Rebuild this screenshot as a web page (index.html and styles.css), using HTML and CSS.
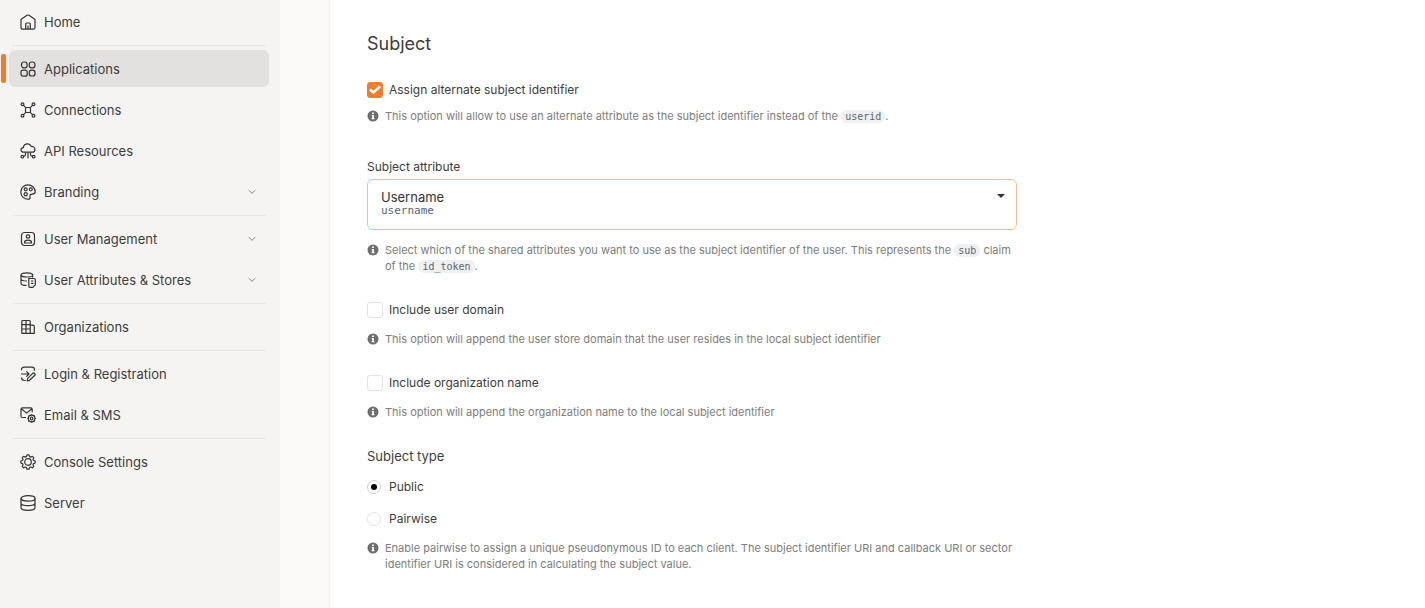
FILE: index.html
```html
<!DOCTYPE html>
<html lang="en">
<head>
<meta charset="utf-8">
<meta name="viewport" content="width=device-width, initial-scale=1">
<title>Application – Subject</title>
<link rel="stylesheet" href="styles.css">
</head>
<body>
<svg class="sprite" aria-hidden="true">
  <symbol id="info" viewBox="0 0 12 12"><circle cx="6" cy="6" r="5.5" fill="currentColor"/><path d="M5 2.5h2v1.6H5zM4.6 5h2.3v3.2h.6v1.1h-3V8.200h.6V6.100h-.5z" fill="#fff"/></symbol>
  <symbol id="chevron" viewBox="0 0 8 6"><path d="M.7 1.200 4 4.300l3.300-3.100" fill="none" stroke="currentColor" stroke-width="1"/></symbol>
</svg>
<div class="layout">
  <nav class="sidebar" aria-label="Main">
    <ul class="group">
      <li><a class="item" href="#home">
        <svg class="icon" viewBox="0 0 16 16"><path d="M1 6.300Q1 5.500 1.600 5L7 1.300q1-.6 2 0L14.400 5q.6.500.6 1.300v7.200q0 1.700-1.700 1.700H2.700Q1 15.200 1 13.500z"/><path d="M5.700 15V10q0-1 1-1h2.600q1 0 1 1v5M8 11.500V15"/></svg>
        <span class="label">Home</span></a></li>
    </ul>
    <ul class="group">
      <li><a class="item active" href="#applications" aria-current="page">
        <svg class="icon" viewBox="0 0 16 16"><rect x="1.500" y="1" width="5.600" height="5.800" rx="2.300"/><rect x="9.300" y="1" width="5.600" height="5.800" rx="2.300"/><rect x="1" y="9.200" width="6.200" height="6" rx="2"/><rect x="9.300" y="9.200" width="5.700" height="5.800" rx="2.300"/></svg>
        <span class="label">Applications</span></a></li>
      <li><a class="item" href="#connections">
        <svg class="icon" viewBox="0 0 16 16"><rect x="5.500" y="5.500" width="5" height="5" rx="1"/><circle cx="2.500" cy="2.300" r="1.400"/><circle cx="13.500" cy="2.300" r="1.400"/><circle cx="2.500" cy="13.700" r="1.400"/><circle cx="13.500" cy="13.700" r="1.400"/><path d="m3.500 3.300 2.300 2.400m6.700-2.400-2.300 2.400m-6.700 7 2.300-2.400m6.700 2.400-2.300-2.400"/></svg>
        <span class="label">Connections</span></a></li>
      <li><a class="item" href="#api-resources">
        <svg class="icon" viewBox="0 0 16 16"><path d="M4 9.200C1.900 9.200 1 8 1 6.800s1-2.200 2.300-2.200C3.700 2.300 5.500.900 7.500.900c1.800 0 3 .9 3.600 2.500 2.200-.1 3.900 1 3.900 3 0 1.700-1.200 2.800-2.800 2.800z"/><circle cx="2.300" cy="13.700" r="1.300"/><circle cx="13.700" cy="13.700" r="1.300"/><path d="M5.500 9.500v2.200q0 1.500-2 1.600M10.500 9.500v2.200q0 1.500 2 1.600M8 9.500v5.800"/></svg>
        <span class="label">API Resources</span></a></li>
      <li><a class="item" href="#branding">
        <svg class="icon" viewBox="0 0 16 16"><path d="M8 .8A7.200 7.200 0 1 0 8 15.200c1.900 0 2.300-1 2-2.300-.3-1.700.3-2.700 2-2.700 2 0 3.200-.6 3.200-2.600A7.200 7.200 0 0 0 8 .8z"/><circle cx="5.700" cy="5.300" r="1.500"/><circle cx="10.800" cy="5.300" r="1.500"/><circle cx="5.700" cy="10.300" r="1.600"/></svg>
        <span class="label">Branding</span><svg class="chevron"><use href="#chevron"/></svg></a></li>
    </ul>
    <ul class="group">
      <li><a class="item" href="#user-management">
        <svg class="icon" viewBox="0 0 16 16"><rect x="1.500" y="1.500" width="13" height="13" rx="3"/><circle cx="8" cy="5.500" r="1.700"/><path d="M4.500 12v-.6c0-1.400 1.500-2.200 3.500-2.200s3.500.8 3.500 2.200v.6z"/></svg>
        <span class="label">User Management</span><svg class="chevron"><use href="#chevron"/></svg></a></li>
      <li><a class="item" href="#user-attributes">
        <svg class="icon" viewBox="0 0 16 16"><ellipse cx="6.800" cy="2.900" rx="5.800" ry="2.100"/><path d="M1 2.900v8.300c0 1.300 2 2.200 5.500 2.200M12.600 2.900v2.500M1 7c.2 1.300 2.300 2 6 2"/><path d="M8.800 6.500h5.200q1.300 0 1.300 1.300v5l-2.500 2.500h-2.700q-1.300 0-1.300-1.300zM11 9h2.300M11 11.400h2.300"/></svg>
        <span class="label">User Attributes &amp; Stores</span><svg class="chevron"><use href="#chevron"/></svg></a></li>
    </ul>
    <ul class="group">
      <li><a class="item" href="#organizations">
        <svg class="icon" viewBox="0 0 16 16"><path d="M1.800 14.300V2.500q0-1 1-1h6.400q1 0 1 1v11.800zM10.200 6.200h2.600q1.500 0 1.500 1.500v6.600h-4.100M6 1.500v12.800M1.800 5.700h8.400M1.800 10h8.400"/></svg>
        <span class="label">Organizations</span></a></li>
    </ul>
    <ul class="group">
      <li><a class="item" href="#login">
        <svg class="icon" viewBox="0 0 16 16"><path d="M1.500 4.300V3.700q0-2.500 2.500-2.500h8q2.500 0 2.500 2.500v1M1.500 11.500q0 3 3 3h1.200M1 8h7.500M6.300 5.300 9 8l-2.700 2.700"/><path d="m7.700 12.300 5-5q1-.8 2 .2.900 1-.1 2l-5 4.800-2.400.5z"/></svg>
        <span class="label">Login &amp; Registration</span></a></li>
      <li><a class="item" href="#email">
        <svg class="icon" viewBox="0 0 16 16"><path d="M6 10.500H2.500q-1.500 0-1.500-1.500V2.300Q1 .8 2.500.8h8.200q1.500 0 1.500 1.500v3M1.300 1.800l5.300 4.300 5.300-4.300"/><circle cx="11.600" cy="11.500" r="1.300"/><circle cx="11.600" cy="11.500" r="3.300"/><path d="M11.600 7.200v1m0 6.600v1M7.300 11.500h1m6.600 0h1M8.600 8.500l.7.700m4.600 4.600.7.700m0-6-.7.700m-4.600 4.600-.7.700"/></svg>
        <span class="label">Email &amp; SMS</span></a></li>
    </ul>
    <ul class="group">
      <li><a class="item" href="#console">
        <svg class="icon" viewBox="0 0 16 16"><path d="M6.400 2.600 7 .9h2l.6 1.700 1.100.5 1.700-.8 1.400 1.400-.8 1.700.5 1.100 1.700.5v2l-1.700.6-.5 1.100.8 1.700-1.400 1.400-1.700-.8-1.100.5L9 15.200H7l-.6-1.700-1.100-.5-1.700.8-1.400-1.400.8-1.700-.5-1.100L.8 9V7l1.700-.5.5-1.100-.8-1.700 1.400-1.400 1.700.8z"/><circle cx="8" cy="8" r="3.300"/></svg>
        <span class="label">Console Settings</span></a></li>
      <li><a class="item" href="#server">
        <svg class="icon" viewBox="0 0 16 16"><ellipse cx="8" cy="3.400" rx="7" ry="2.700"/><path d="M1 3.400v9.200c0 1.500 3.100 2.700 7 2.700s7-1.200 7-2.700V3.400M1 8c0 1.500 3.100 2.700 7 2.700S15 9.500 15 8"/></svg>
        <span class="label">Server</span></a></li>
    </ul>
  </nav>
  <main class="content">
    <h1 class="title">Subject</h1>
    <form class="form">
      <div class="option">
        <label class="check"><input type="checkbox" checked aria-describedby="alt-hint">Assign alternate subject identifier</label>
        <p class="hint close" id="alt-hint"><svg class="info"><use href="#info"/></svg><span>This option will allow to use an alternate attribute as the subject identifier instead of the <code>userid</code>.</span></p>
      </div>

      <div class="field">
        <label for="attribute">Subject attribute</label>
        <div class="dropdown">
          <select id="attribute" aria-describedby="attribute-hint"><option>Username</option></select>
          <span class="value">username</span>
          <svg class="caret" viewBox="0 0 8 4"><path d="M0 0h8L4 4z"/></svg>
        </div>
        <p class="hint" id="attribute-hint"><svg class="info"><use href="#info"/></svg><span>Select which of the shared attributes you want to use as the subject identifier of the user. This represents the <code>sub</code> claim of the <code>id_token</code>.</span></p>
      </div>

      <div class="option">
        <label class="check"><input type="checkbox" aria-describedby="domain-hint">Include user domain</label>
        <p class="hint" id="domain-hint"><svg class="info"><use href="#info"/></svg><span>This option will append the user store domain that the user resides in the local subject identifier</span></p>
      </div>

      <div class="option">
        <label class="check"><input type="checkbox" aria-describedby="org-hint">Include organization name</label>
        <p class="hint" id="org-hint"><svg class="info"><use href="#info"/></svg><span>This option will append the organization name to the local subject identifier</span></p>
      </div>

      <fieldset class="types" aria-describedby="type-hint">
        <legend>Subject type</legend>
        <label class="check"><input type="radio" name="type" checked>Public</label>
        <label class="check"><input type="radio" name="type">Pairwise</label>
        <p class="hint" id="type-hint"><svg class="info"><use href="#info"/></svg><span>Enable pairwise to assign a unique pseudonymous ID to each client. The subject identifier URI and callback URI or sector identifier URI is considered in calculating the subject value.</span></p>
      </fieldset>
    </form>
  </main>
</div>
</body>
</html>
```
FILE: styles.css
```css
* { box-sizing: border-box; }

body {
  margin: 0;
  background: #faf9f8;
  color: #3d3d3d;
  font: 12px/16px Inter, "Liberation Sans", sans-serif;
}

.sprite { display: none; }

.layout {
  display: grid;
  grid-template-columns: 280px 1fr;
  min-height: 100vh;
}

/* Sidebar */
.sidebar {
  padding: 3px 11px 16px 9px;
  background: #f5f4f2;
}

.group {
  display: flex;
  flex-direction: column;
  gap: 4px;
  margin: 0;
  padding: 0;
  list-style: none;
}

.group + .group::before {
  content: "";
  height: 1px;
  margin: 5px 3px 0;
  background: #e6e5e3;
}

.item {
  position: relative;
  display: flex;
  align-items: center;
  gap: 8px;
  height: 37px;
  padding: 0 13px 0 11px;
  border-radius: 6px;
  color: #3d3d3d;
  font-size: 13px;
  text-decoration: none;
}

.item.active { background: #e2e1df; }

.item.active::before {
  content: "";
  position: absolute;
  left: -8px;
  top: 4px;
  bottom: 4px;
  width: 5px;
  border-radius: 2px;
  background: #f47b2c;
}

.icon {
  width: 16px;
  height: 16px;
  flex: none;
  fill: none;
  stroke: #333;
  stroke-width: 1.2;
  stroke-linejoin: round;
}

.label { flex: 1; }

.chevron {
  width: 8px;
  height: 6px;
  color: #888;
}

/* Content */
.content {
  margin-left: 49px;
  padding: 32px 37px;
  border-left: 1px solid #f2f1f0;
  background: #fff;
}

.form {
  display: flex;
  flex-direction: column;
  gap: 28px;
  max-width: 650px;
}

.title {
  margin: 0 0 26px;
  font-size: 18px;
  font-weight: 400;
  line-height: 24px;
}

.field {
  display: flex;
  flex-direction: column;
  gap: 4px;
  margin-top: 7px;
}

.check {
  display: flex;
  align-items: center;
  gap: 6px;
  width: fit-content;
}

.check input {
  display: grid;
  place-items: center;
  width: 16px;
  height: 16px;
  margin: 0;
  appearance: none;
  border: 1px solid #e2e2e3;
  border-radius: 3px;
  background: #fff;
}

.check input[type="checkbox"]:checked {
  border-color: #f47b2c;
  background: #f47b2c;
}

.check input[type="checkbox"]:checked::before {
  content: "";
  width: 12px;
  height: 10px;
  background: #fff;
  clip-path: polygon(0 52%, 17% 35%, 37% 57%, 83% 6%, 100% 23%, 37% 92%);
}

.check input[type="radio"] {
  width: 14px;
  height: 14px;
  margin-right: 2px;
  border-radius: 50%;
}

.check input[type="radio"]:checked { border-color: #cfcfd0; }

.check input[type="radio"]:checked::before {
  content: "";
  width: 6px;
  height: 6px;
  border-radius: 50%;
  background: #000;
}

.hint {
  display: flex;
  gap: 6px;
  margin: 13px 0 0;
  color: #7d7d7d;
  font-size: 11px;
}

.hint.close { margin-top: 10px; }

.field .hint { margin-top: 8px; }

.info {
  width: 12px;
  height: 12px;
  flex: none;
  margin-top: 2px;
  color: #6e6e6e;
}

code {
  padding: 1px 4px;
  border-radius: 6px;
  background: #eff0f1;
  color: #5b6670;
  font: 10px/12px "DejaVu Sans Mono", monospace;
}

.dropdown {
  display: grid;
  grid-template-columns: 1fr auto;
}

.dropdown select {
  grid-area: 1 / 1 / 3 / 3;
  height: 51px;
  padding: 0 10px 15px 13px;
  appearance: none;
  border: 1px solid #fbb992;
  border-radius: 6px;
  background: #fff;
  color: #333;
  font: 13px/16px Inter, "Liberation Sans", sans-serif;
}

.dropdown .value {
  grid-area: 2 / 1;
  align-self: end;
  padding: 0 0 11px 14px;
  color: #5b6670;
  font: 11px/16px "DejaVu Sans Mono", monospace;
  pointer-events: none;
}

.caret {
  grid-area: 1 / 2;
  width: 8px;
  height: 4px;
  margin: 15px 12px 0 0;
  fill: #333;
  pointer-events: none;
}

.types {
  display: flex;
  flex-direction: column;
  gap: 16px;
  min-width: 0;
  margin: 0;
  padding: 0;
  border: 0;
}

.types legend {
  margin-bottom: 15px;
  padding: 0;
  font-size: 13px;
}

.types .hint { margin-top: -3px; }
```
